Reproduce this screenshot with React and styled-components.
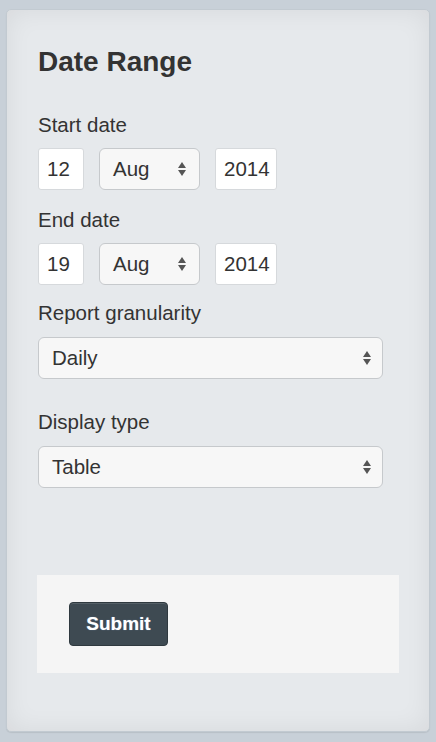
import React from "react";
import styled, { createGlobalStyle } from "styled-components";

const Global = createGlobalStyle`
  html, body { margin: 0; padding: 0; }
  body {
    background: #c8d0d8;
    font-family: "Liberation Sans", Arial, sans-serif;
    color: #333;
  }
`;

const Page = styled.div`
  padding: 9px 6px 10px 6px;
`;

const Panel = styled.div`
  box-sizing: border-box;
  height: 723px;
  border-radius: 5px;
  background: #e6e9ec;
  border: 1px solid #c2cad1;
  box-shadow: inset 0 0 26px rgba(0, 0, 0, 0.07), 0 1px 1px rgba(0, 0, 0, 0.08);
  padding: 38px 0 0 31px;
`;

const Title = styled.h3`
  margin: 0;
  font-size: 28px;
  line-height: 28px;
  font-weight: bold;
  color: #333;
`;

const Label = styled.label`
  display: block;
  font-size: 20.5px;
  line-height: 24px;
  color: #333;
  margin-top: ${(p) => p.$mt}px;
`;

const Row = styled.div`
  display: flex;
  gap: 15px;
  margin-top: 11px;
`;

const TextBox = styled.div`
  box-sizing: border-box;
  width: ${(p) => p.$w}px;
  height: 42px;
  background: #fff;
  border: 1px solid #d6d9dc;
  border-radius: 3px;
  padding-left: 8px;
  display: flex;
  align-items: center;
  font-size: 20.5px;
  color: #333;
`;

const Select = styled.div`
  position: relative;
  box-sizing: border-box;
  width: ${(p) => p.$w}px;
  height: 42px;
  margin-top: ${(p) => p.$mt || 0}px;
  background: #f7f7f7;
  border: 1px solid #c6c9cc;
  border-radius: 6px;
  padding-left: 13px;
  display: flex;
  align-items: center;
  font-size: 20.5px;
  color: #333;
`;

const Arrow = styled.svg`
  position: absolute;
  right: ${(p) => p.$r}px;
  top: 50%;
  margin-top: -8px;
  width: 10px;
  height: 16px;
`;

const Footer = styled.div`
  margin-top: 87px;
  margin-left: -1px;
  width: 362px;
  height: 98px;
  box-sizing: border-box;
  background: #f5f5f5;
  padding: 27px 0 0 32px;
`;

const Button = styled.button`
  box-sizing: border-box;
  width: 99px;
  height: 44px;
  border-radius: 4px;
  background: #3e4a52;
  border: 1px solid #2f393f;
  box-shadow: inset 0 1px 0 rgba(255, 255, 255, 0.12);
  color: #fff;
  font-family: "Liberation Sans", Arial, sans-serif;
  font-weight: bold;
  font-size: 19px;
  text-shadow: 0 0 1px rgba(160, 200, 255, 0.6);
  padding: 0;
  cursor: pointer;
`;

const Updown = ({ r }) => (
  <Arrow $r={r} viewBox="0 0 10 16">
    <path d="M5 1 L9 7 L1 7 Z" fill="#555" />
    <path d="M1 9 L9 9 L5 15 Z" fill="#555" />
  </Arrow>
);

const DateRow = ({ day, month, year }) => (
  <Row>
    <TextBox $w={46}>{day}</TextBox>
    <Select $w={101}>
      {month}
      <Updown r={12} />
    </Select>
    <TextBox $w={62}>{year}</TextBox>
  </Row>
);

export default function App() {
  return (
    <>
      <Global />
      <Page>
        <Panel>
          <Title>Date Range</Title>
          <Label $mt={37}>Start date</Label>
          <DateRow day="12" month="Aug" year="2014" />
          <Label $mt={18}>End date</Label>
          <DateRow day="19" month="Aug" year="2014" />
          <Label $mt={16}>Report granularity</Label>
          <Select $w={345} $mt={12}>
            Daily
            <Updown r={10} />
          </Select>
          <Label $mt={31}>Display type</Label>
          <Select $w={345} $mt={12}>
            Table
            <Updown r={10} />
          </Select>
          <Footer>
            <Button>Submit</Button>
          </Footer>
        </Panel>
      </Page>
    </>
  );
}
